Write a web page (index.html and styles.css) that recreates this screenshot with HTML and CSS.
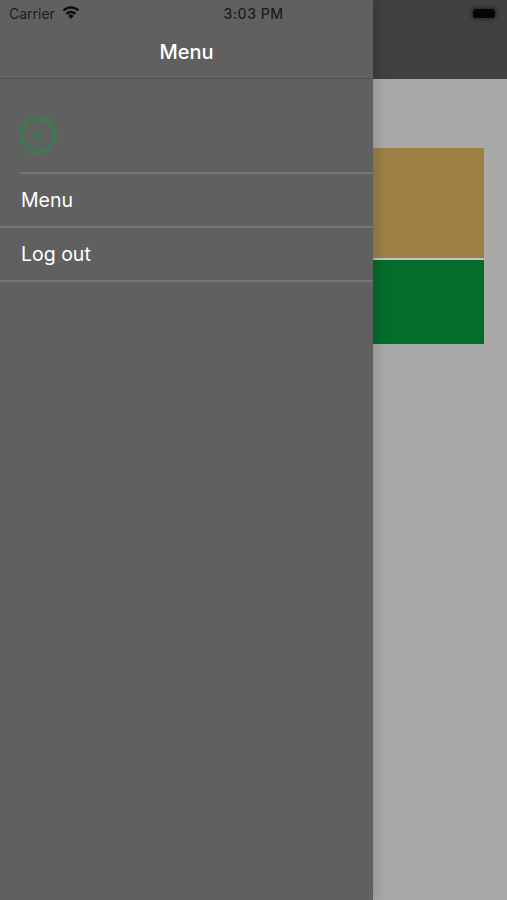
FILE: index.html
```html
<!DOCTYPE html>
<html lang="en">
<head>
  <meta charset="UTF-8">
  <meta name="viewport" content="width=device-width, initial-scale=1.0">
  <title>Menu</title>
  <link rel="stylesheet" href="styles.css">
</head>
<body>
  <div class="status-bar">
    <div class="status-left">
      <span>Carrier</span>
      <svg class="wifi" viewBox="0 0 18 14" width="18" height="14">
        <path class="wifi-arc" d="M1.500 5.500A10.500 10.500 0 0 1 16.500 5.500"/>
        <path class="wifi-arc" d="M4.600 8.900A6 6 0 0 1 13.400 8.900"/>
        <path d="M9 13.800L6.300 10.900A3.800 3.800 0 0 1 11.700 10.900Z"/>
      </svg>
    </div>
    <span class="status-time">3:03 PM</span>
    <div class="status-right">
      <div class="battery"></div>
    </div>
  </div>

  <div class="screen">
    <nav class="drawer">
      <header class="drawer-header">Menu</header>
      <div class="gear-row">
        <svg class="gear" viewBox="0 0 40 40" width="40" height="40">
          <defs>
            <path id="tooth" d="M15.520 6.210L16.990 5.820L17.430 1.680L22.570 1.680L23.010 5.820L24.480 6.210"/>
          </defs>
          <use href="#tooth"/>
          <use href="#tooth" transform="rotate(36 20 20)"/>
          <use href="#tooth" transform="rotate(72 20 20)"/>
          <use href="#tooth" transform="rotate(108 20 20)"/>
          <use href="#tooth" transform="rotate(144 20 20)"/>
          <use href="#tooth" transform="rotate(180 20 20)"/>
          <use href="#tooth" transform="rotate(216 20 20)"/>
          <use href="#tooth" transform="rotate(252 20 20)"/>
          <use href="#tooth" transform="rotate(288 20 20)"/>
          <use href="#tooth" transform="rotate(324 20 20)"/>
          <circle cx="20" cy="20" r="3.500"/>
        </svg>
      </div>
      <ul class="menu-list">
        <li class="menu-item">Menu</li>
        <li class="menu-item">Log out</li>
      </ul>
    </nav>

    <main class="content">
      <div class="top-bar"></div>
      <div class="blocks">
        <div class="block block-tan"></div>
        <div class="block block-green"></div>
      </div>
    </main>
  </div>
</body>
</html>
```

FILE: styles.css
```css
html, body {
  margin: 0;
  height: 100%;
  overflow: hidden;
}
body {
  position: relative;
  font-family: Inter, "Liberation Sans", sans-serif;
  background-color: #a9a9a9;
}
.status-bar {
  position: absolute;
  z-index: 2;
  top: 0;
  left: 0;
  right: 0;
  height: 27px;
  display: grid;
  grid-template-columns: 1fr auto 1fr;
  align-items: center;
  padding: 0 9px;
  font-size: 14px;
  color: #1c1c1d;
}
.status-left {
  display: flex;
  align-items: center;
  gap: 7px;
}
.wifi {
  fill: #0c0c0c;
  margin-top: -3px;
}
.wifi-arc {
  fill: none;
  stroke: #0c0c0c;
  stroke-width: 2.400;
}
.status-time {
  font-weight: 500;
  letter-spacing: 0.5px;
}
.status-right {
  display: flex;
  justify-content: flex-end;
}
.battery {
  width: 22px;
  height: 9px;
  margin-right: 3px;
  background-color: #050505;
  border-radius: 3px;
  box-shadow: 0 0 3px 2px #2e2e2e;
}
.screen {
  display: flex;
  height: 900px;
}
.drawer {
  width: 373px;
  flex: none;
  background-color: #606061;
  box-shadow: 3px 0 12px rgba(0, 0, 0, 0.16);
  position: relative;
  color: #fff;
}
.drawer-header {
  height: 79px;
  box-sizing: border-box;
  padding-top: 40px;
  text-align: center;
  font-size: 20px;
  font-weight: 500;
  line-height: 24px;
  border-bottom: 1px solid #4f4f50;
}
.gear-row {
  height: 93px;
  padding: 36px 0 17px 18px;
  box-sizing: border-box;
}
.gear {
  display: block;
  fill: none;
  stroke: #2e864b;
  stroke-width: 1.800;
  stroke-linejoin: round;
}
.menu-list {
  list-style: none;
  margin: 0;
  padding: 0;
}
.menu-item {
  margin-left: 20px;
  height: 54px;
  box-sizing: border-box;
  padding: 0 0 0 1px;
  border-top: 2px solid #747475;
  display: flex;
  align-items: center;
  font-size: 19.500px;
}
.menu-item:last-child {
  border-bottom: 2px solid #747475;
  height: 56px;
  margin-left: 0;
  padding-left: 21px;
}
.content {
  flex: 1;
  display: flex;
  flex-direction: column;
}
.top-bar {
  height: 79px;
  background-color: #404040;
}
.blocks {
  padding: 69px 23px 0 0;
  display: flex;
  flex-direction: column;
}
.block-tan {
  height: 110px;
  background-color: #9c8044;
  border-bottom: 2px solid #c4c4c4;
}
.block-green {
  height: 84px;
  background-color: #036d2c;
}
```
